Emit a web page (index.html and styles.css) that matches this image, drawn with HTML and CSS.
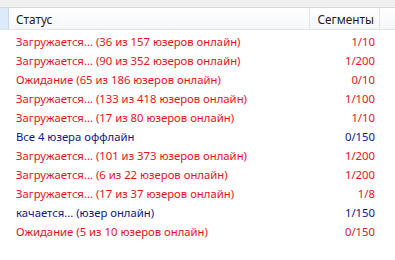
FILE: index.html
```html
<!DOCTYPE html>
<html>
<head>
<meta charset="utf-8">
<link rel="stylesheet" href="styles.css">
</head>
<body>
<div class="topbar"></div>
<div class="header">
  <div class="hcell lead"></div>
  <div class="hcell status">Статус</div>
  <div class="hcell seg">Сегменты</div>
  <div class="hcell rest"></div>
</div>
<div class="list">
  <div class="row red"><span class="c-status">Загружается... (36 из 157 юзеров онлайн)</span><span class="c-seg">1/10</span></div>
  <div class="row red"><span class="c-status">Загружается... (90 из 352 юзеров онлайн)</span><span class="c-seg">1/200</span></div>
  <div class="row red"><span class="c-status">Ожидание (65 из 186 юзеров онлайн)</span><span class="c-seg">0/10</span></div>
  <div class="row red"><span class="c-status">Загружается... (133 из 418 юзеров онлайн)</span><span class="c-seg">1/100</span></div>
  <div class="row red"><span class="c-status">Загружается... (17 из 80 юзеров онлайн)</span><span class="c-seg">1/10</span></div>
  <div class="row blue"><span class="c-status">Все 4 юзера оффлайн</span><span class="c-seg">0/150</span></div>
  <div class="row red"><span class="c-status">Загружается... (101 из 373 юзеров онлайн)</span><span class="c-seg">1/200</span></div>
  <div class="row red"><span class="c-status">Загружается... (6 из 22 юзеров онлайн)</span><span class="c-seg">1/200</span></div>
  <div class="row red"><span class="c-status">Загружается... (17 из 37 юзеров онлайн)</span><span class="c-seg">1/8</span></div>
  <div class="row blue"><span class="c-status">качается... (юзер онлайн)</span><span class="c-seg">1/150</span></div>
  <div class="row red"><span class="c-status">Ожидание (5 из 10 юзеров онлайн)</span><span class="c-seg">0/150</span></div>
</div>
</body>
</html>
```
FILE: styles.css
```css
html, body {
  margin: 0;
  padding: 0;
  background: #ffffff;
  width: 395px;
  height: 260px;
  overflow: hidden;
  font-family: "Noto Sans", "DejaVu Sans", sans-serif;
  font-size: 11.3px;
}
.topbar {
  height: 7px;
  background: #f0f0f0;
  border-bottom: 1px solid #d9d9d9;
}
.header {
  display: flex;
  height: 22px;
  background: linear-gradient(#ffffff, #f6f7f9);
  border-bottom: 1px solid #e3e5e8;
  box-sizing: border-box;
  font-size: 11.8px;
}
.hcell {
  display: flex;
  align-items: center;
  color: #1e1e1e;
  border-right: 1px solid #e3e5e8;
  box-sizing: border-box;
}
.hcell.lead {
  width: 9px;
  background: #dcebfb;
  border-right-color: #c8d8ea;
}
.hcell.status {
  width: 301px;
  padding-left: 7px;
}
.hcell.seg {
  width: 70px;
  justify-content: flex-end;
  padding-right: 5px;
}
.hcell.rest {
  flex: 1;
  border-right: none;
}
.list {
  padding-top: 2px;
}
.row {
  display: flex;
  height: 19px;
  align-items: center;
}
.c-status {
  width: 301px;
  margin-left: 9px;
  padding-left: 7px;
  box-sizing: border-box;
  white-space: nowrap;
}
.c-seg {
  width: 70px;
  text-align: right;
  padding-right: 5px;
  box-sizing: border-box;
}
.red { color: #e3141c; }
.blue { color: #12148a; }
```
